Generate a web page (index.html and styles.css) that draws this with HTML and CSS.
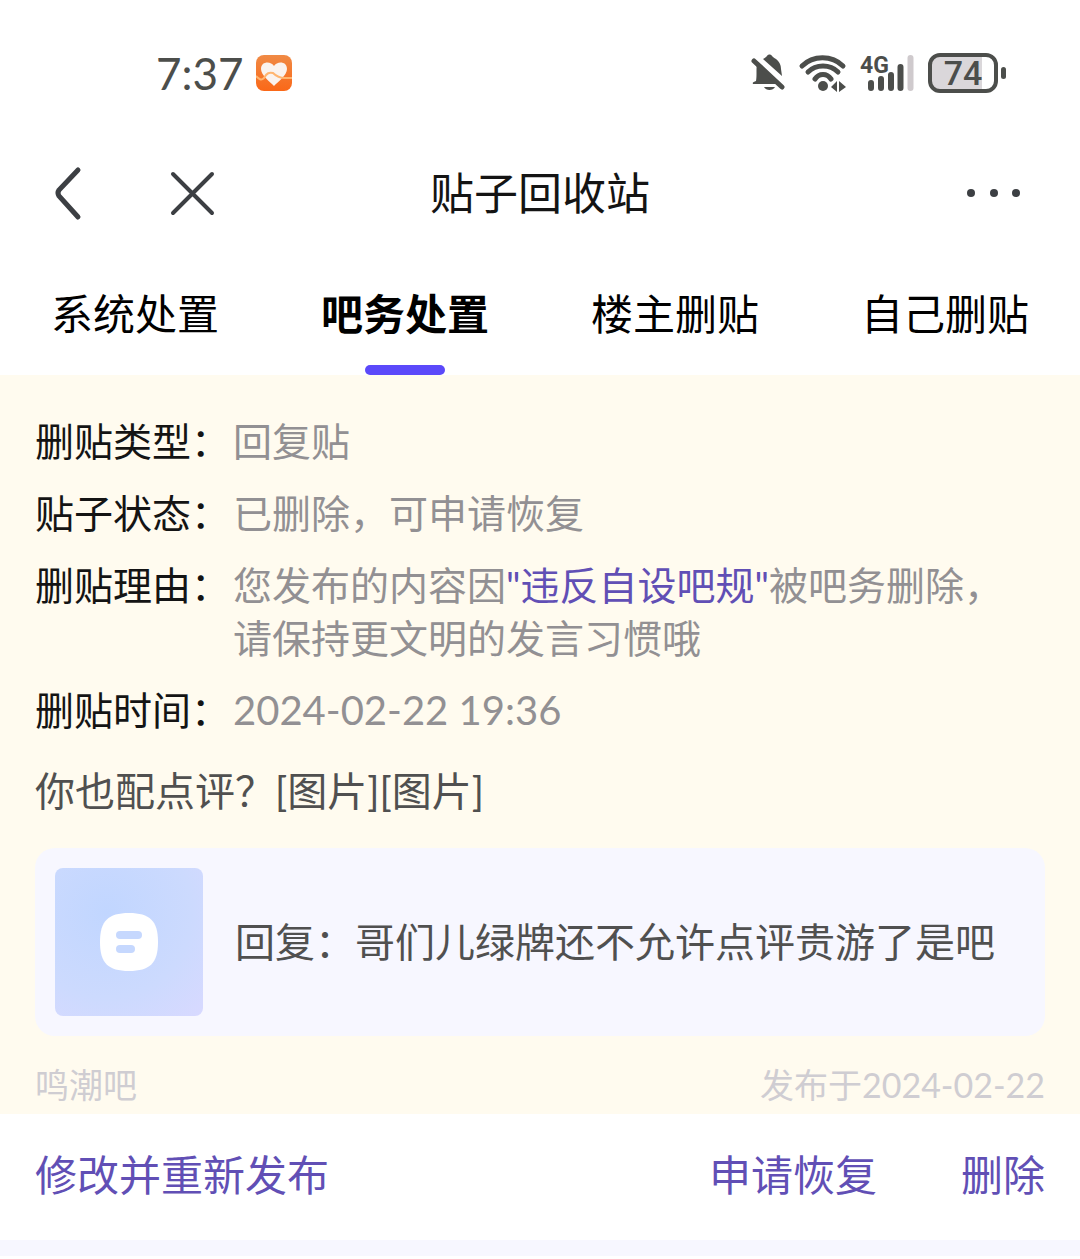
FILE: index.html
```html
<!DOCTYPE html>
<html lang="zh-CN">
<head>
    <meta charset="UTF-8">
    <meta name="viewport" content="width=device-width, initial-scale=1.0">
    <title>贴子回收站</title>
    <link rel="stylesheet" href="styles.css">
</head>
<body>
    <div class="status-bar">
        <div class="status-left">
            <span class="clock">7:37</span>
            <svg class="health" width="36" height="36" viewBox="0 0 36 36">
                <defs>
                    <linearGradient id="orange" x1="0" y1="0" x2="0" y2="1">
                        <stop offset="0" stop-color="#f08a45"/>
                        <stop offset="1" stop-color="#fa6818"/>
                    </linearGradient>
                </defs>
                <rect width="36" height="36" rx="8" fill="url(#orange)"/>
                <path d="M18 31C14 27 5 20 5 14C5 6 15 6 18 11C21 6 31 6 31 14C31 20 22 27 18 31Z" fill="#faf3ef"/>
                <path d="M0 21C3 24 5 26 8 23C11 18 13 17 17 18C21 22 24 23 29 23H36" fill="none" stroke="#ffb570" stroke-width="2"/>
            </svg>
        </div>
        <div class="status-right">
            <svg width="36" height="40" viewBox="0 0 36 40" fill="#4c4e4b">
                <path d="M7 10L28 31H3C2 29 4 29 6 28C7 23 6 17 7 10Z"/>
                <path d="M13 6C15 5 16 4 17 3C18 1 21 1 22 3C23 4 24 5 26 6C30 9 31 13 31 16L32 23Z"/>
                <path d="M4 8L32 34" stroke="#4c4e4b" stroke-width="5" stroke-linecap="round"/>
                <path d="M14 34H25C23 38 16 38 14 34Z"/>
            </svg>
            <svg width="50" height="40" viewBox="0 0 50 40" fill="none" stroke="#4c4e4b" stroke-width="5" stroke-linecap="round">
                <path d="M4 13C15 2 34 2 45 13"/>
                <path d="M10 19C18 11 32 11 40 19"/>
                <path d="M17 26C21 20 29 20 33 26"/>
                <circle cx="25" cy="33" r="5" fill="#4c4e4b" stroke="none"/>
                <path d="M33 34L39 28V39ZM41 28L48 34L41 39Z" fill="#4c4e4b" stroke="none"/>
            </svg>
            <svg class="signal" width="56" height="40" viewBox="0 0 56 40" stroke="#4c4e4b" stroke-width="6" stroke-linecap="round">
                <text x="0" y="20">4G</text>
                <path d="M11 30V35M21 26V35M31 22V35M40.500 14V35"/>
                <path d="M50.500 5V35" stroke="#cfcacd"/>
            </svg>
            <div class="battery"><span>74</span></div>
        </div>
    </div>

    <header class="nav">
        <button type="button" aria-label="返回">
            <svg width="30" height="56" viewBox="0 0 30 56"><path d="M25 5L6 25Q4 28 6 31L25 52" stroke-width="5"/></svg>
        </button>
        <button type="button" aria-label="关闭">
            <svg width="48" height="48" viewBox="0 0 48 48"><path d="M4 5L43 44M43 5L4 44" stroke-width="4"/></svg>
        </button>
        <h1>贴子回收站</h1>
        <button type="button" class="more" aria-label="更多">
            <svg width="56" height="12" viewBox="0 0 56 12" class="dots"><circle cx="5" cy="6" r="4"/><circle cx="28" cy="6" r="4"/><circle cx="50" cy="6" r="4"/></svg>
        </button>
    </header>

    <nav class="tabs">
        <button type="button">系统处置</button>
        <button type="button" class="active">吧务处置</button>
        <button type="button">楼主删贴</button>
        <button type="button">自己删贴</button>
    </nav>

    <main>
        <article class="post">
            <dl class="info">
                <dt>删贴类型：</dt>
                <dd>回复贴</dd>
                <dt>贴子状态：</dt>
                <dd>已删除，可申请恢复</dd>
                <dt>删贴理由：</dt>
                <dd>您发布的内容因<a href="#">"违反自设吧规"</a>被吧务删除，<br>请保持更文明的发言习惯哦</dd>
                <dt>删贴时间：</dt>
                <dd class="time">2024-02-22 19:36</dd>
            </dl>
            <p class="content">你也配点评？[图片][图片]</p>
            <a class="quote" href="#">
                <span class="thumb">
                    <svg width="58" height="58" viewBox="0 0 58 58">
                        <path d="M29 0C50 0 58 8 58 29S50 58 29 58S0 50 0 29S8 0 29 0Z" fill="#fff"/>
                        <rect x="16" y="18" width="26" height="8" rx="4" fill="#c6d8fe"/>
                        <rect x="16" y="32" width="19" height="8" rx="4" fill="#c6d8fe"/>
                    </svg>
                </span>
                <span class="quote-text">回复：哥们儿绿牌还不允许点评贵游了是吧</span>
            </a>
            <div class="meta">
                <span>鸣潮吧</span>
                <span>发布于2024-02-22</span>
            </div>
        </article>
        <div class="actions">
            <button type="button">修改并重新发布</button>
            <button type="button" class="restore">申请恢复</button>
            <button type="button">删除</button>
        </div>
        <div class="divider"></div>
    </main>
</body>
</html>
```
FILE: styles.css
```css
* {
    box-sizing: border-box;
}
body {
    margin: 0;
    background: #fff;
    color: #141414;
    font-family: Lato, "Noto Sans CJK SC", sans-serif;
    font-size: 40px;
    line-height: 53px;
}
button {
    padding: 0;
    border: none;
    background: none;
    color: inherit;
    font: inherit;
    cursor: pointer;
}
a {
    color: #614fb5;
    text-decoration: none;
}
svg {
    display: block;
}

/* status bar */
.status-bar {
    display: flex;
    justify-content: space-between;
    align-items: center;
    height: 130px;
    padding: 16px 74px 0 156px;
    color: #4c4e4b;
}
.status-left,
.status-right {
    display: flex;
    align-items: center;
    gap: 12px;
}
.clock {
    font-size: 44px;
}
.signal text {
    font-family: Roboto, sans-serif;
    font-size: 23px;
    font-weight: 700;
    fill: #4c4e4b;
    stroke: none;
}
.battery {
    position: relative;
    width: 70px;
    height: 40px;
    margin-right: 8px;
    border: 4px solid #4c4e4b;
    border-radius: 12px;
    background: linear-gradient(to right, #dad7da 80%, #fff 80%);
    font-family: Roboto, sans-serif;
    font-size: 34px;
    font-weight: 500;
    line-height: 32px;
    text-align: center;
}
.battery::after {
    content: "";
    position: absolute;
    top: 10px;
    right: -12px;
    width: 5px;
    height: 12px;
    border-radius: 3px;
    background: #4c4e4b;
}

/* title bar */
.nav {
    display: grid;
    grid-template-columns: 116px 1fr auto 1fr 116px;
    align-items: center;
    height: 126px;
    padding: 0 53px;
}
.nav button {
    justify-self: start;
}
.nav .more {
    grid-column: 4 / 6;
    justify-self: end;
    padding-right: 5px;
}
.nav h1 {
    margin: 0;
    font-size: 44px;
    font-weight: 400;
}
.nav path {
    fill: none;
    stroke: #3c3f43;
    stroke-linecap: round;
}
.dots {
    fill: #3c3f43;
}

.tabs {
    display: grid;
    grid-template-columns: repeat(4, 1fr);
    height: 119px;
    color: #000;
    font-size: 42px;
}
.tabs button {
    display: flex;
    flex-direction: column;
    align-items: center;
    justify-content: space-between;
    padding-top: 32px;
}
.tabs .active {
    font-weight: 700;
}
.tabs .active::after {
    content: "";
    width: 80px;
    height: 10px;
    border-radius: 5px;
    background: #5b49fa;
}

/* deleted post */
.post {
    padding: 40px 35px 4px;
    background: #fffbef;
}
.info {
    display: grid;
    grid-template-columns: 198px 1fr;
    row-gap: 19px;
    margin: 0;
    font-size: 39px;
}
.info dd {
    margin: 0;
    color: #929093;
}
.info .time {
    font-size: 40px;
}
.content {
    margin: 28px 0 30px;
    color: #505050;
}
.quote {
    display: flex;
    align-items: center;
    gap: 32px;
    padding: 20px;
    border-radius: 20px;
    background: #f7f7ff;
    color: #505050;
}
.thumb {
    display: grid;
    flex: none;
    place-items: center;
    width: 148px;
    height: 148px;
    border-radius: 8px;
    background: radial-gradient(circle at 35% 30%, #c1d6ff, #ccdafe 60%, #d8d9ff);
}
.meta {
    display: flex;
    justify-content: space-between;
    margin-top: 24px;
    color: #cfcdd2;
    font-size: 34px;
    line-height: 50px;
}

.actions {
    display: flex;
    align-items: center;
    gap: 84px;
    height: 126px;
    padding: 0 35px 4px;
    color: #614fb5;
    font-size: 42px;
}
.restore {
    margin-left: auto;
}
.divider {
    height: 16px;
    background: #f7f7ff;
}
```
